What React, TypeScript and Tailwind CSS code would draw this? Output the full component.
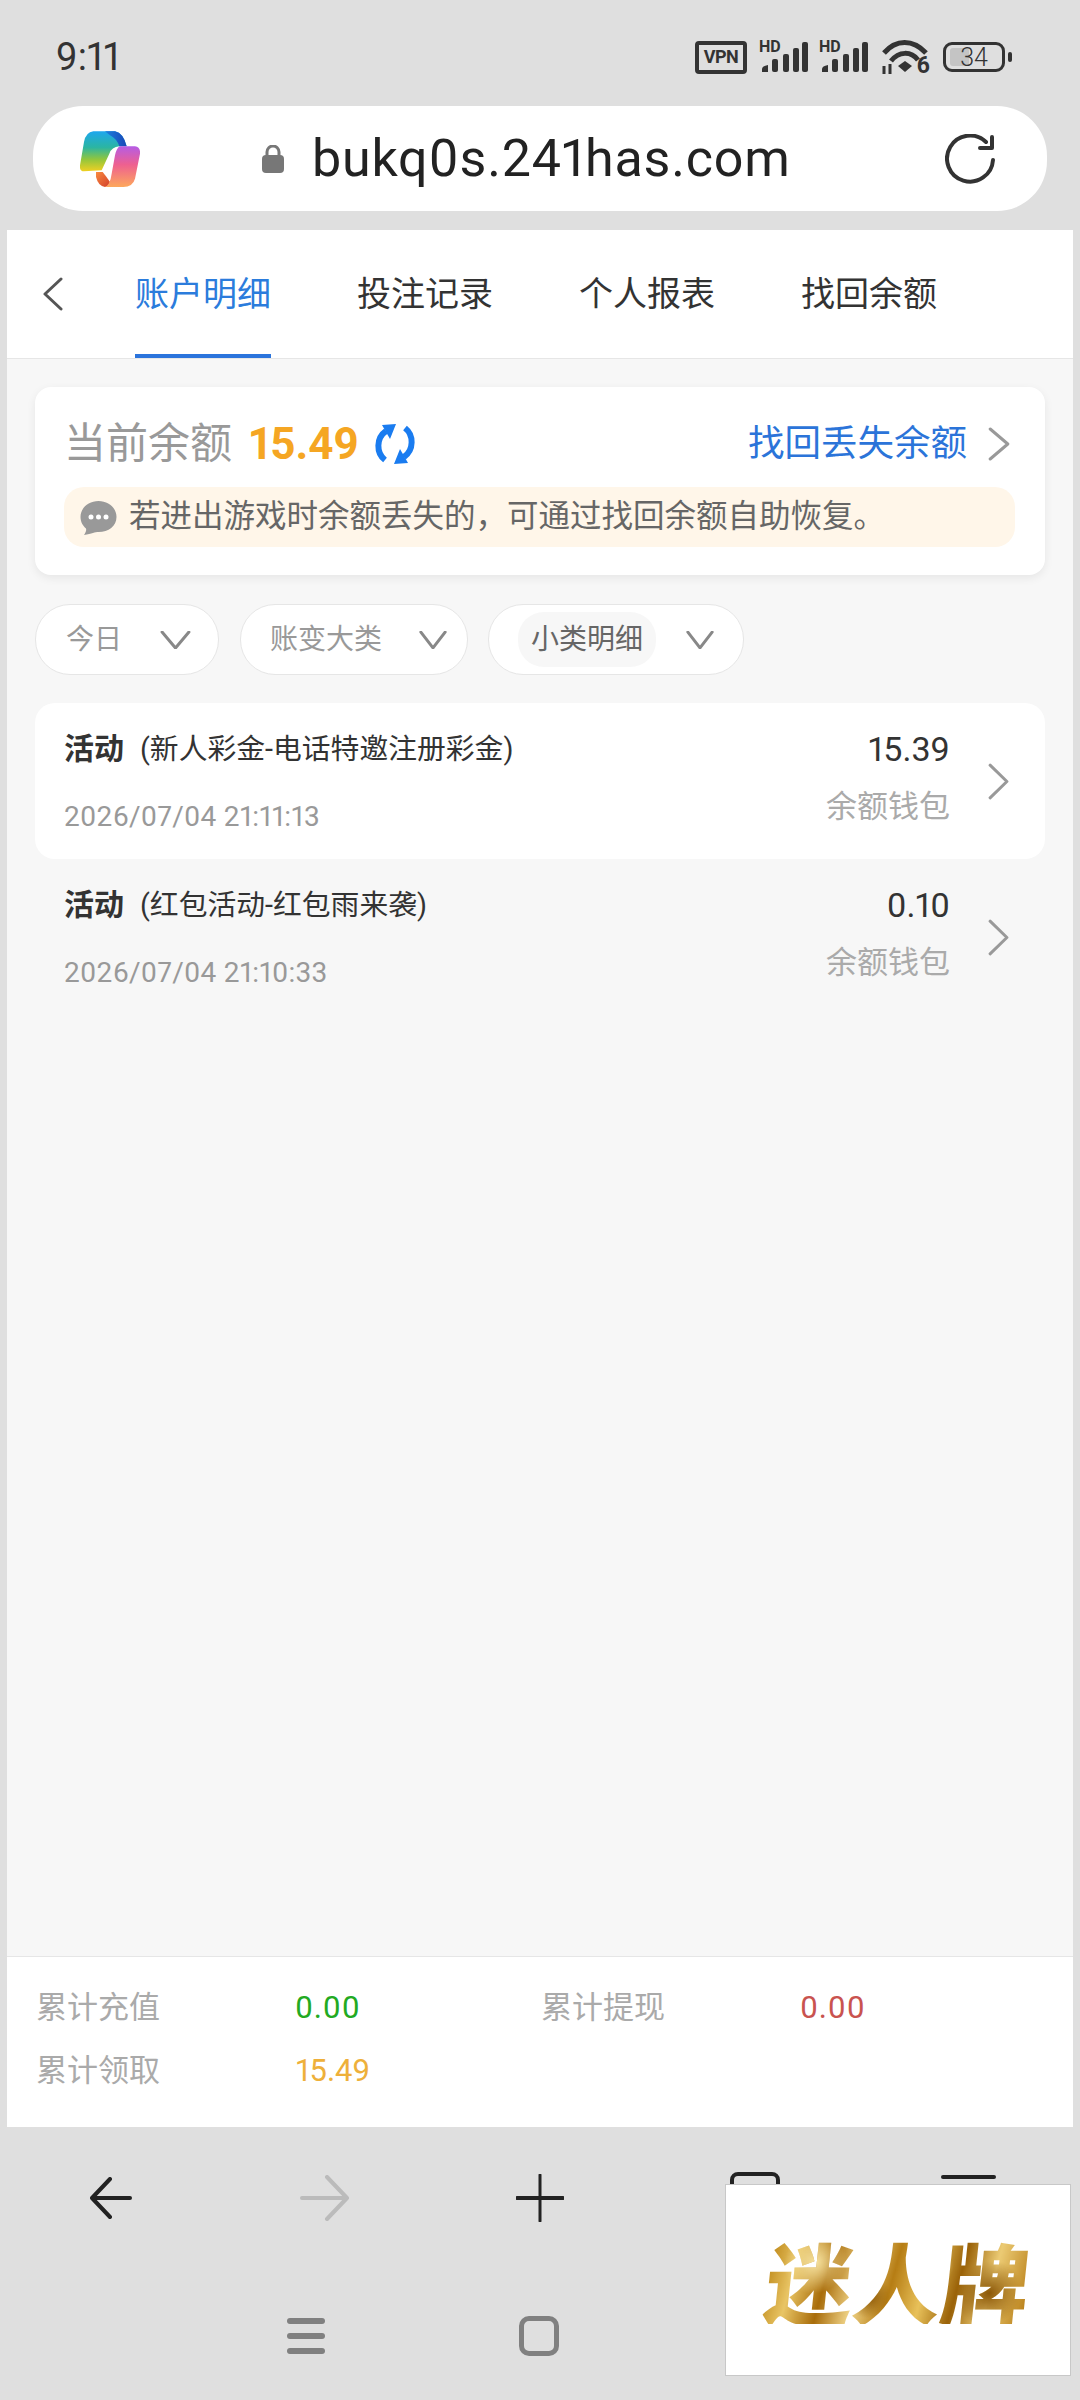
function Chevron({ className, dir = "right", stroke = "#999" }: { className: string; dir?: "left" | "right" | "down"; stroke?: string }) {
  const pts = dir === "right" ? "2,2 18,17 2,32" : dir === "left" ? "18,2 2,17 18,32" : "2,2 15,32 28,2"
  const box = dir === "down" ? "0 0 30 34" : "0 0 20 34"
  return (
    <svg className={className} viewBox={box} preserveAspectRatio="none" fill="none">
      <polyline points={pts} stroke={stroke} strokeWidth="3" strokeLinecap="round" strokeLinejoin="round" vectorEffect="non-scaling-stroke" />
    </svg>
  )
}

function Signal() {
  return (
    <div className="relative w-[49px] h-[30px]">
      <span className="absolute left-0 top-[-3px] text-[16px] leading-[16px] font-bold text-[#333]">HD</span>
      <svg className="absolute inset-0" viewBox="0 0 49 30" fill="#333">
        <path d="M3 30v-3q0-3 6-4v7z" />
        <rect x="13" y="17" width="6" height="13" rx="2" />
        <rect x="24" y="12" width="6" height="18" rx="2" />
        <rect x="34" y="6" width="6" height="24" rx="2" />
        <rect x="43" y="0" width="6" height="30" rx="2" />
      </svg>
    </div>
  )
}

function StatusBar() {
  return (
    <div className="h-[106px] flex items-center justify-between pl-[56px] pr-[68px] pt-[8px]">
      <span className="text-[38px] leading-none text-[#333]">9:11</span>
      <div className="flex items-center">
        <div className="w-[52px] h-[33px] border-[4px] border-[#333] rounded-[4px] flex items-center justify-center text-[18px] leading-none font-bold text-[#333] tracking-[-0.5px]">VPN</div>
        <div className="ml-[12px]"><Signal /></div>
        <div className="ml-[11px]"><Signal /></div>
        <div className="ml-[14px] relative w-[48px] h-[38px]">
          <svg className="w-[48px] h-[38px]" viewBox="0 0 48 38" fill="none" stroke="#333" strokeWidth="5">
            <path d="M2 15C14 1 31 1 44 15" />
            <path d="M9 23C17 13 29 13 36 22" />
            <path d="M16 28L23 23L30 28L23 34Z" fill="#333" stroke="none" />
            <path d="M2 28v8M8 26v10" strokeWidth="3" />
          </svg>
          <span className="absolute right-0 bottom-0 text-[23px] leading-[20px] font-bold text-[#333]">6</span>
        </div>
        <div className="ml-[13px] w-[62px] h-[30px] border-[3px] border-[#333] rounded-[9px] relative flex items-center justify-center text-[25px] leading-none text-[#333] font-light">
          <div className="absolute left-[4px] top-[3px] bottom-[3px] w-[19px] bg-[#c4c4c4] rounded-[3px]" />
          <span className="relative">34</span>
        </div>
        <div className="ml-[3px] w-[4px] h-[10px] bg-[#333] rounded-full" />
      </div>
    </div>
  )
}

function CopilotLogo() {
  return (
    <svg className="w-[60px] h-[56px]" viewBox="60 62 180 168">
      <defs>
        <linearGradient id="cpA" x1="0" y1="0" x2="0" y2="1">
          <stop offset="0" stopColor="#1ea7ee" />
          <stop offset="0.4" stopColor="#2bb5a2" />
          <stop offset="0.7" stopColor="#92c63d" />
          <stop offset="1" stopColor="#f0d022" />
        </linearGradient>
        <linearGradient id="cpB" x1="0" y1="0" x2="0" y2="1">
          <stop offset="0" stopColor="#b65ce4" />
          <stop offset="0.45" stopColor="#ee6090" />
          <stop offset="1" stopColor="#fda85c" />
        </linearGradient>
        <linearGradient id="cpC" x1="0" y1="0" x2="1" y2="0">
          <stop offset="0" stopColor="#1b7fdc" />
          <stop offset="1" stopColor="#1a47b8" />
        </linearGradient>
        <linearGradient id="cpD" x1="0" y1="0" x2="1" y2="1">
          <stop offset="0" stopColor="#f88a3f" />
          <stop offset="1" stopColor="#d33f2b" />
        </linearGradient>
      </defs>
      <path d="M100 63L165 63Q190 68 200 108L178 108Q155 110 148 130L125 180L72 183Q58 183 60 165L72 95Q78 65 100 63Z" fill="url(#cpA)" />
      <path d="M135 63H165Q190 68 200 108H178Q170 85 150 75Z" fill="url(#cpC)" />
      <path d="M108 185H128Q140 200 150 215Q145 228 135 230Q115 228 108 200Z" fill="url(#cpD)" />
      <path d="M180 108H225Q242 110 240 130L225 205Q218 230 190 230L135 230Q150 225 155 190L165 135Q170 112 180 108Z" fill="url(#cpB)" />
    </svg>
  )
}

function AddressBar() {
  return (
    <div className="mx-[33px] h-[105px] bg-white rounded-[50px] flex items-center pl-[47px] pr-[52px]">
      <CopilotLogo />
      <svg className="ml-[122px] w-[22px] h-[28px]" viewBox="0 0 22 28" fill="#777">
        <path d="M5 13V7a6 6 0 0 1 12 0v6" fill="none" stroke="#777" strokeWidth="3" />
        <rect x="0" y="10" width="22" height="18" rx="4" />
      </svg>
      <span className="ml-[28px] text-[52px] leading-none text-[#222] tracking-[0.8px]">bukq0s.241has.com</span>
      <svg className="ml-auto w-[50px] h-[50px]" viewBox="0 0 50 50" fill="none" stroke="#333" strokeWidth="4" strokeLinecap="round" strokeLinejoin="round">
        <path d="M41 8A23 23 0 1 0 48 26" />
        <path d="M47 3V14H35" />
      </svg>
    </div>
  )
}

function TabBar() {
  const tabs = ["账户明细", "投注记录", "个人报表", "找回余额"]
  return (
    <div className="h-[129px] bg-white border-b-[1px] border-[#e6e6e6] flex">
      <div className="w-[128px] pl-[36px] flex items-center">
        <Chevron className="w-[20px] h-[34px]" dir="left" stroke="#555" />
      </div>
      <div className="flex gap-[86px] h-full">
        {tabs.map((t, i) => (
          <div
            key={t}
            className={
              i === 0
                ? "h-full pt-[5px] flex items-center text-[34px] text-[#2b7cdc] border-b-[4px] border-[#2b74dc]"
                : "h-full pt-[5px] flex items-center text-[34px] text-[#333] border-b-[4px] border-transparent"
            }
          >
            {t}
          </div>
        ))}
      </div>
    </div>
  )
}

function BalanceCard() {
  return (
    <div className="mx-[28px] mt-[28px] h-[188px] bg-white rounded-[16px] shadow-[0_3px_10px_rgba(0,0,0,0.07)] pl-[29px] pr-[30px] pt-[27px]">
      <div className="flex items-center h-[60px]">
        <span className="text-[42px] text-[#999] leading-none">当前余额</span>
        <span className="ml-[17px] text-[44px] font-bold text-[#f5a623] leading-none">15.49</span>
        <svg className="ml-[15px] w-[42px] h-[44px]" viewBox="0 0 42 44" fill="none" stroke="#1a7cf0" strokeWidth="6">
          <path d="M11 38C2 31 2 16 12 9" />
          <path d="M31 6C40 13 40 28 30 35" />
          <path d="M8 3L22 2L16 17Z" fill="#1a7cf0" stroke="none" />
          <path d="M34 41L20 42L26 27Z" fill="#1a7cf0" stroke="none" />
        </svg>
        <span className="ml-auto text-[36.500px] text-[#2b74d9] leading-none">找回丢失余额</span>
        <Chevron className="ml-[21px] mr-[5px] w-[22px] h-[34px]" />
      </div>
      <div className="mt-[13px] h-[60px] bg-[#fff6e9] rounded-[20px] flex items-center pl-[16px]">
        <svg className="w-[37px] h-[35px]" viewBox="0 0 37 35">
          <path d="M18.500 1C28.500 1 36.500 8 36.500 17S28.500 32 18.500 32C15 32 12 33.500 4 35C6 32 6.500 30 6 28.500C3 26 .500 22 .500 17C.500 8 8.500 1 18.500 1Z" fill="#999" />
          <circle cx="11" cy="17" r="2.500" fill="#fff" />
          <circle cx="18.500" cy="17" r="2.500" fill="#fff" />
          <circle cx="26" cy="17" r="2.500" fill="#fff" />
        </svg>
        <span className="ml-[12px] text-[31.500px] text-[#666] leading-none">若进出游戏时余额丢失的，可通过找回余额自助恢复。</span>
      </div>
    </div>
  )
}

function Filters() {
  return (
    <div className="mx-[28px] mt-[29px] flex text-[28px]">
      <div className="w-[184px] h-[71px] bg-white rounded-[35px] border border-[#e6e6e6] flex items-center pl-[30px] text-[#999]">
        今日
        <Chevron className="ml-[38px] w-[31px] h-[18px]" dir="down" stroke="#888" />
      </div>
      <div className="ml-[21px] w-[228px] h-[71px] bg-white rounded-[35px] border border-[#e6e6e6] flex items-center pl-[29px] text-[#999]">
        账变大类
        <Chevron className="ml-[37px] w-[28px] h-[18px]" dir="down" stroke="#888" />
      </div>
      <div className="ml-[20px] w-[256px] h-[71px] bg-white rounded-[35px] border border-[#e6e6e6] flex items-center pl-[29px] text-[#666]">
        <div className="w-[138px] h-[55px] bg-[#f7f7f7] rounded-[26px] flex items-center justify-center">小类明细</div>
        <Chevron className="ml-[30px] w-[28px] h-[18px]" dir="down" stroke="#888" />
      </div>
    </div>
  )
}

function Row({ sub, time, amount, active }: { sub: string; time: string; amount: string; active?: boolean }) {
  return (
    <div className={active ? "h-[156px] bg-white rounded-[20px] flex pl-[29px] pr-[36px]" : "h-[156px] flex pl-[29px] pr-[36px]"}>
      <div className="flex-1">
        <div className="mt-[28px] h-[36px] flex items-center">
          <span className="text-[30px] font-bold text-[#333] leading-none">活动</span>
          <span className="ml-[16px] text-[28.800px] text-[#333] leading-none">{sub}</span>
        </div>
        <div className="mt-[32px] text-[28px] text-[#999] leading-[36px] tracking-[0.3px]">{time}</div>
      </div>
      <div className="flex flex-col items-end">
        <div className="mt-[26px] text-[34px] text-[#333] leading-[40px]">{amount}</div>
        <div className="mt-[18px] text-[31px] text-[#aaa] leading-[40px]">余额钱包</div>
      </div>
      <div className="ml-[38px] flex items-center">
        <Chevron className="w-[21px] h-[37px]" />
      </div>
    </div>
  )
}

function Totals() {
  return (
    <div className="h-[171px] bg-white border-t-[1px] border-[#e6e6e6] pt-[19px] pl-[29px] text-[31px] leading-[63px]">
      <div className="flex">
        <span className="w-[259px] text-[#aaa]">累计充值</span>
        <span className="w-[246px] text-[#22aa22] tracking-[0.8px]">0.00</span>
        <span className="w-[259px] text-[#aaa]">累计提现</span>
        <span className="text-[#c9534f] tracking-[0.8px]">0.00</span>
      </div>
      <div className="flex">
        <span className="w-[259px] text-[#aaa]">累计领取</span>
        <span className="ml-[1px] text-[#eeb03a]">15.49</span>
      </div>
    </div>
  )
}

function BrowserNav() {
  return (
    <div className="h-[85px] mt-[28px] relative flex items-center pl-[90px]">
      <svg className="w-[42px] h-[42px]" viewBox="0 0 42 42" fill="none" stroke="#222" strokeWidth="4" strokeLinecap="round" strokeLinejoin="round">
        <path d="M20 2L2 21L20 40" />
        <path d="M4 21H40" />
      </svg>
      <svg className="ml-[168px] w-[50px] h-[46px]" viewBox="0 0 50 46" fill="none" stroke="#bbb" strokeWidth="4" strokeLinecap="round" strokeLinejoin="round">
        <path d="M27 2L47 23L27 44" />
        <path d="M2 23H45" />
      </svg>
      <svg className="ml-[166px] w-[48px] h-[48px]" viewBox="0 0 48 48" fill="none" stroke="#222" strokeLinecap="round">
        <path d="M1 24H47" strokeWidth="4" />
        <path d="M24 1V47" strokeWidth="3" />
      </svg>
      <div className="ml-[166px] w-[50px] h-[50px] border-[4px] border-[#222] rounded-[8px] -mt-[2px]" />
      <div className="ml-[161px] w-[55px] h-[44px] flex flex-col justify-between -mt-[2px]">
        <div className="h-[4px] bg-[#222] rounded-full" />
        <div className="h-[4px] bg-[#222] rounded-full" />
      </div>
    </div>
  )
}

function SystemNav() {
  return (
    <div className="mt-[76px] h-[40px] flex items-center pl-[287px]">
      <div className="w-[38px] h-[36px] flex flex-col justify-between">
        <div className="h-[6px] bg-[#808080] rounded-full" />
        <div className="h-[6px] bg-[#808080] rounded-full" />
        <div className="h-[6px] bg-[#808080] rounded-full" />
      </div>
      <div className="ml-[194px] w-[40px] h-[40px] border-[5px] border-[#808080] rounded-[10px]" />
    </div>
  )
}

export default function App() {
  return (
    <div className="relative w-[1080px] h-[2400px] bg-[#dfdfdf] font-['Roboto','Noto_Sans_CJK_SC',sans-serif] proportional-nums overflow-hidden">
      <StatusBar />
      <AddressBar />
      <div className="mt-[19px] mx-[7px] h-[1897px] bg-[#f7f7f7] flex flex-col">
        <TabBar />
        <BalanceCard />
        <Filters />
        <div className="mx-[28px] mt-[28px]">
          <Row active sub="(新人彩金-电话特邀注册彩金)" time="2026/07/04 21:11:13" amount="15.39" />
          <Row sub="(红包活动-红包雨来袭)" time="2026/07/04 21:10:33" amount="0.10" />
        </div>
        <div className="flex-1" />
        <Totals />
      </div>
      <BrowserNav />
      <SystemNav />
      {/* floating watermark over the browser toolbar */}
      <div className="absolute left-[725px] top-[2184px] w-[346px] h-[192px] bg-white border border-[#c8c8c8] flex items-center justify-center">
        <span className="-skew-x-6 text-[88px] leading-none font-black font-['Noto_Sans_CJK_SC',sans-serif] bg-clip-text text-transparent bg-[radial-gradient(circle_at_18%_30%,#f6e2a0_0,transparent_14%),radial-gradient(circle_at_40%_70%,#8f5a06_0,transparent_12%),radial-gradient(circle_at_62%_35%,#f3d888_0,transparent_13%),radial-gradient(circle_at_85%_65%,#8a5606_0,transparent_14%),linear-gradient(100deg,#b8800f_0%,#e9c565_12%,#a86c0a_24%,#f0d488_36%,#b67d14_48%,#e8c15a_60%,#9a6208_72%,#eccb74_84%,#b57a12_100%)]">迷人牌</span>
      </div>
    </div>
  )
}
